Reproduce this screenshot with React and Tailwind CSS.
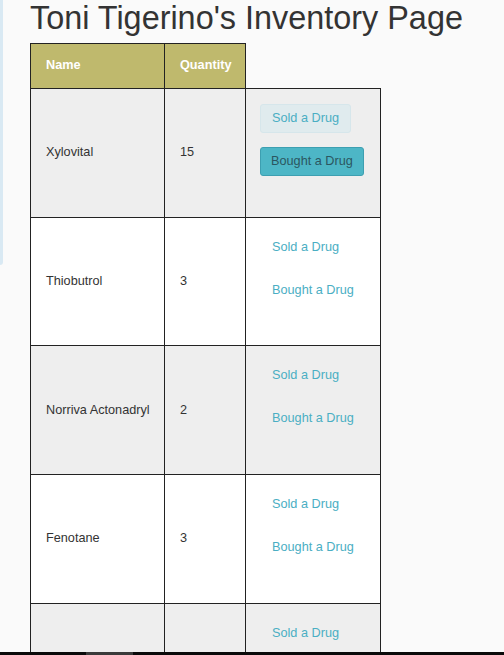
import React from "react";

const drugs = [
  { name: "Xylovital", qty: 15 },
  { name: "Thiobutrol", qty: 3 },
  { name: "Norriva Actonadryl", qty: 2 },
  { name: "Fenotane", qty: 3 },
  { name: "Panacetamol", qty: 7 },
];

const App = () => {
  return (
    <div className="min-h-screen bg-[#fafafa] font-['Liberation_Sans',Arial,sans-serif] text-[#333]">
      {/* sidebar sliver on the left edge */}
      <div className="fixed left-0 top-0 h-[265px] w-[3px] rounded-br-sm bg-[#d9e9f3]" />

      <div className="pl-[30px]">
        <h1 className="m-0 pt-[2px] text-[32.4px] leading-[33px] font-normal text-[#333]">
          Toni Tigerino's Inventory Page
        </h1>

        <table className="mt-[8px] border-collapse text-[12.7px]">
          <thead>
            <tr className="h-[45px]">
              <th className="w-[134px] border border-[#222] bg-[#bfb96d] pl-[15px] text-left font-bold text-white">
                Name
              </th>
              <th className="w-[81px] border border-[#222] bg-[#bfb96d] pl-[15px] text-left font-bold text-white">
                Quantity
              </th>
              <th className="w-[135px] border-0" />
            </tr>
          </thead>
          <tbody>
            {drugs.map((d, i) => (
              <tr key={d.name} className={i % 2 === 0 ? "h-[128.7px] bg-[#eeeeee]" : "h-[128.7px] bg-white"}>
                <td className="border border-[#222] pl-[15px] align-middle">{d.name}</td>
                <td className="border border-[#222] pl-[15px] align-middle">{d.qty}</td>
                <td className="border border-[#222] pl-[14px] pt-[15px] align-top">
                  <div className="flex flex-col items-start gap-[14px]">
                    {i === 0 ? (
                      <>
                        <button className="h-[29px] rounded-[3px] border border-[#d6e6eb] bg-[#e0ebee] px-[11px] text-[#4aaec3]">
                          Sold a Drug
                        </button>
                        <button className="h-[29px] rounded-[3px] border border-[#3d9fb1] bg-[#4db6c6] px-[10px] text-[#2b5661]">
                          Bought a Drug
                        </button>
                      </>
                    ) : (
                      <>
                        <button className="h-[29px] border border-transparent px-[11px] text-[#4aaec3]">
                          Sold a Drug
                        </button>
                        <button className="h-[29px] border border-transparent px-[11px] text-[#4aaec3]">
                          Bought a Drug
                        </button>
                      </>
                    )}
                  </div>
                </td>
              </tr>
            ))}
          </tbody>
        </table>
      </div>

      {/* horizontal scrollbar strip */}
      <div className="fixed bottom-0 left-0 h-[3px] w-full bg-[#0a0a0a]">
        <div className="ml-[86px] h-full w-[47px] bg-[#3a3a3a]" />
      </div>
    </div>
  );
};

export default App;
